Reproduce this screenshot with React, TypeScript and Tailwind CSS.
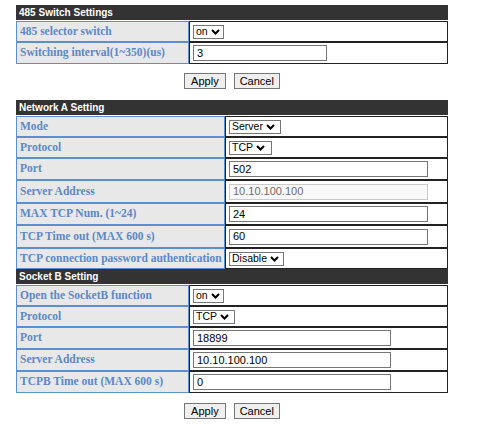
import React from "react";

type RowProps = {
  label: string;
  labelW: string;
  h?: string;
  children: React.ReactNode;
};

function Chevron() {
  return (
    <svg width="9" height="6" viewBox="0 0 9 6" className="ml-[3px] shrink-0">
      <polyline points="1,1 4.5,4.5 8,1" fill="none" stroke="#000" strokeWidth="2" />
    </svg>
  );
}

function Select({ value, w }: { value: string; w: string }) {
  return (
    <div className={`flex h-[14px] items-center border border-[#767676] bg-white pl-[2px] pr-[2px] text-[10.5px] leading-none text-black ${w}`}>
      <span>{value}</span>
      <Chevron />
    </div>
  );
}

function Input({ value, w, disabled }: { value: string; w: string; disabled?: boolean }) {
  return (
    <div
      className={`flex h-[16px] items-center border pl-[3px] text-[11px] leading-none ${w} ${
        disabled ? "border-[#c9c9c9] bg-[#f8f8f8] text-[#6d6d6d]" : "border-[#767676] bg-white text-black"
      }`}
    >
      {value}
    </div>
  );
}

function Row({ label, labelW, h = "h-[21px]", children }: RowProps) {
  return (
    <div className={`flex ${h}`}>
      <div
        className={`flex shrink-0 items-center overflow-hidden border border-[#5b8fd3] bg-[#e8e8e8] pl-[3px] font-['Liberation_Serif',serif] text-[11.5px] font-bold whitespace-nowrap text-[#5b89c7] ${labelW}`}
      >
        {label}
      </div>
      <div className="flex flex-1 items-center border border-[#222] bg-white pl-[3px]">{children}</div>
    </div>
  );
}

function Header({ title }: { title: string }) {
  return (
    <div className="flex h-[15px] items-center bg-[#333] pl-[3px] text-[10px] font-bold text-white">{title}</div>
  );
}

function Buttons() {
  return (
    <div className="flex h-[16px] justify-center gap-[8px]">
      <button className="h-[16px] border border-[#767676] bg-[#efefef] px-[6px] text-[11px] leading-none text-black">
        Apply
      </button>
      <button className="h-[16px] border border-[#767676] bg-[#efefef] px-[5px] text-[11px] leading-none text-black">
        Cancel
      </button>
    </div>
  );
}

export default function App() {
  return (
    <div className="min-h-[426px] w-[482px] bg-white pt-[5px] pl-[16px] font-['Liberation_Sans',Arial,sans-serif]">
      <div className="w-[432px]">
        <Header title="485 Switch Settings" />
        <div className="mt-px">
          <Row label="485 selector switch" labelW="w-[173px]">
            <Select value="on" w="w-[31px]" />
          </Row>
          <Row label="Switching interval(1~350)(us)" labelW="w-[173px]" h="h-[22px]">
            <Input value="3" w="w-[134px]" />
          </Row>
        </div>

        <div className="mt-[9px]">
          <Buttons />
        </div>

        <div className="mt-[11px]">
          <Header title="Network A Setting" />
          <div className="mt-px">
            <Row label="Mode" labelW="w-[209px]">
              <Select value="Server" w="w-[52px]" />
            </Row>
            <Row label="Protocol" labelW="w-[209px]">
              <Select value="TCP" w="w-[43px]" />
            </Row>
            <Row label="Port" labelW="w-[209px]" h="h-[22px]">
              <Input value="502" w="w-[199px]" />
            </Row>
            <Row label="Server Address" labelW="w-[209px]" h="h-[23px]">
              <Input value="10.10.100.100" w="w-[199px]" disabled />
            </Row>
            <Row label="MAX TCP Num. (1~24)" labelW="w-[209px]" h="h-[22px]">
              <Input value="24" w="w-[199px]" />
            </Row>
            <Row label="TCP Time out (MAX 600 s)" labelW="w-[209px]" h="h-[23px]">
              <Input value="60" w="w-[199px]" />
            </Row>
            <Row label="TCP connection password authentication" labelW="w-[209px]">
              <Select value="Disable" w="w-[55px]" />
            </Row>
          </div>
        </div>

        <Header title="Socket B Setting" />
        <div className="mt-px">
          <Row label="Open the SocketB function" labelW="w-[173px]">
            <Select value="on" w="w-[31px]" />
          </Row>
          <Row label="Protocol" labelW="w-[173px]">
            <Select value="TCP" w="w-[42px]" />
          </Row>
          <Row label="Port" labelW="w-[173px]" h="h-[22px]">
            <Input value="18899" w="w-[198px]" />
          </Row>
          <Row label="Server Address" labelW="w-[173px]" h="h-[22px]">
            <Input value="10.10.100.100" w="w-[198px]" />
          </Row>
          <Row label="TCPB Time out (MAX 600 s)" labelW="w-[173px]" h="h-[22px]">
            <Input value="0" w="w-[198px]" />
          </Row>
        </div>

        <div className="mt-[10px]">
          <Buttons />
        </div>
      </div>
    </div>
  );
}
